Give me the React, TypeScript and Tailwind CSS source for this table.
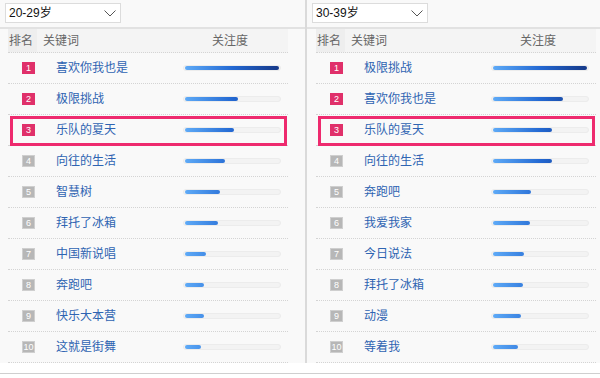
type Item = { name: string; w: number };

const left: Item[] = [
  { name: "喜欢你我也是", w: 95 },
  { name: "极限挑战", w: 53 },
  { name: "乐队的夏天", w: 49 },
  { name: "向往的生活", w: 40 },
  { name: "智慧树", w: 35 },
  { name: "拜托了冰箱", w: 33 },
  { name: "中国新说唱", w: 21 },
  { name: "奔跑吧", w: 19 },
  { name: "快乐大本营", w: 19 },
  { name: "这就是街舞", w: 16 },
];

const right: Item[] = [
  { name: "极限挑战", w: 94 },
  { name: "喜欢你我也是", w: 70 },
  { name: "乐队的夏天", w: 59 },
  { name: "向往的生活", w: 59 },
  { name: "奔跑吧", w: 38 },
  { name: "我爱我家", w: 37 },
  { name: "今日说法", w: 31 },
  { name: "拜托了冰箱", w: 30 },
  { name: "动漫", w: 28 },
  { name: "等着我", w: 25 },
];

const font = "font-['Liberation_Sans','Noto_Sans_CJK_SC',sans-serif]";

function Select({ label }: { label: string }) {
  return (
    <div className="mt-[3px] flex h-[20px] w-[116px] items-center justify-between border border-[#dcdcdc] bg-white pl-[3px] pr-[4px] text-[12px] text-[#111]">
      <span>{label}</span>
      <svg width="12" height="7" viewBox="0 0 12 7">
        <polyline points="0.5,0.5 6,6 11.5,0.5" fill="none" stroke="#555" strokeWidth="1" />
      </svg>
    </div>
  );
}

function Row({ rank, item, boxed }: { rank: number; item: Item; boxed: boolean }) {
  const hot = rank <= 3;
  return (
    <div className="relative flex h-[31px] items-center border-b border-dotted border-[#d4d4d4]">
      <div className="w-[14px]" />
      <div
        className={`flex h-[12px] w-[13px] items-center justify-center text-[9px] leading-none text-white ${
          hot ? "bg-[#e0306a]" : "bg-[#b7b7b7] border border-[#cfcfcf]"
        }`}
      >
        {rank}
      </div>
      <div className="w-[21px]" />
      <div className="w-[127px] text-[12px] text-[#2f64b2]">{item.name}</div>
      <div className="flex h-[6px] w-[98px] items-center rounded-full border border-[#ececec] bg-[#f3f3f3] px-px">
        <div
          className="h-[4px] rounded-full bg-gradient-to-r from-[#5eaaf7] via-[#2368d2] to-[#163887] bg-[length:95px_100%]"
          style={{ width: item.w }}
        />
      </div>
      {boxed && <div className="absolute left-[2px] right-[1px] top-px h-[30px] border-[3px] border-[#ee2a6e]" />}
    </div>
  );
}

function Panel({ label, items, pl }: { label: string; items: Item[]; pl: string }) {
  return (
    <div className="flex h-full flex-col">
      <div className="h-[28px] pl-[5px]">
        <Select label={label} />
      </div>
      <div className="h-[2px] bg-[#e2e2e2]" />
      <div className={pl === "l" ? "pl-[8px]" : "pl-[9px]"}>
        <div className="w-[280px]">
          <div className="flex h-[24px] items-center border-b border-dotted border-[#d4d4d4] bg-[#f4f4f4] text-[12px] text-[#666]">
            <div className="flex h-full w-[29px] items-center bg-[#eeeeee] pl-px">排名</div>
            <div className="w-[175px] pl-[6px]">关键词</div>
            <div>关注度</div>
          </div>
          {items.map((it, i) => (
            <Row key={it.name + i} rank={i + 1} item={it} boxed={i === 2} />
          ))}
        </div>
      </div>
    </div>
  );
}

export default function App() {
  return (
    <div className={`h-[378px] w-[600px] overflow-hidden bg-white ${font}`}>
      <div className="flex h-[363px] bg-[#f9f9f9]">
        <div className="w-[307px] border-r-2 border-[#dadada]">
          <Panel label="20-29岁" items={left} pl="l" />
        </div>
        <div className="flex-1">
          <Panel label="30-39岁" items={right} pl="r" />
        </div>
      </div>
      <div className="h-[10px] bg-white" />
      <div className="h-px bg-[#cfcfcf]" />
    </div>
  );
}
